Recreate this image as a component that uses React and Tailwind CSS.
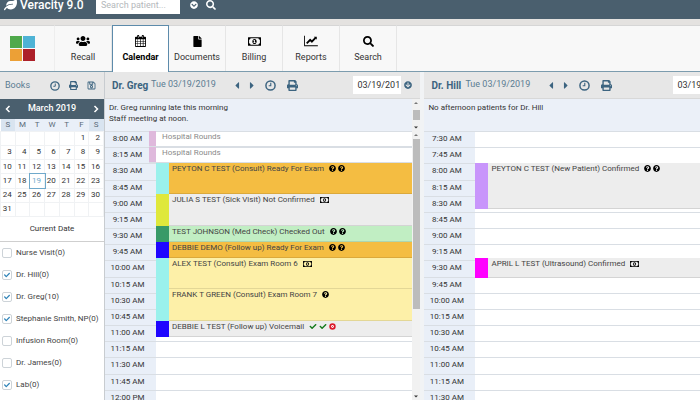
import { FaUsers, FaFile, FaSearch, FaPrint, FaRegSave, FaLeaf, FaCheck, FaQuestionCircle, FaChevronCircleDown, FaArrowCircleDown, FaCaretLeft, FaCaretRight, FaTimesCircle } from 'react-icons/fa'

const ClockIcon = ({ className }) => (
  <svg viewBox="0 0 12 12" className={className} fill="none" stroke="currentColor" aria-hidden="true">
    <circle cx="6" cy="6" r="5" strokeWidth="1.600" />
    <path d="M6.300 3v3.300H4" strokeWidth="1.200" />
  </svg>
)

const CalendarIcon = ({ className }) => (
  <svg viewBox="0 0 26 28" className={className} fill="currentColor" aria-hidden="true">
    <path fillRule="evenodd" d="M2 4h3V2a2 2 0 0 1 2-2h1a2 2 0 0 1 2 2v2h6V2a2 2 0 0 1 2-2h1a2 2 0 0 1 2 2v2h3a2 2 0 0 1 2 2v20a2 2 0 0 1-2 2H2a2 2 0 0 1-2-2V6a2 2 0 0 1 2-2zM2 10v4h4v-4zM7 10v4h5v-4zM13.5 10v4h5v-4zM20 10v4h4v-4zM2 15.300v4.400h4v-4.400zM7 15.300v4.400h5v-4.400zM13.500 15.300v4.400h5v-4.400zM20 15.300v4.400h4v-4.400zM2 21v5h4v-5zM7 21v5h5v-5zM13.500 21v5h5v-5zM20 21v5h4v-5zM7 2v5h1V2zM18 2v5h1V2z" />
  </svg>
)

const MoneyIcon = ({ className }) => (
  <svg viewBox="0 0 30 20" className={className} fill="currentColor" aria-hidden="true">
    <path fillRule="evenodd" d="M1 0h28a1 1 0 0 1 1 1v18a1 1 0 0 1-1 1H1a1 1 0 0 1-1-1V1a1 1 0 0 1 1-1zM6 2.500a4 4 0 0 1-3.500 3.500v8a4 4 0 0 1 3.500 3.500h18a4 4 0 0 1 3.500-3.500V6A4 4 0 0 1 24 2.500zM15 4c3 0 5 2.700 5 6s-2 6-5 6-5-2.700-5-6 2-6 5-6zM14.200 6.500L12 8.400l1 1.200 1-.8V12h-1.500v1.500h5V12H16V6.500z" />
  </svg>
)

const ChartIcon = ({ className }) => (
  <svg viewBox="0 0 32 28" className={className} fill="currentColor" aria-hidden="true">
    <path d="M0 2h2v22h30v2H0zM29.500 4v7l-2-2-9 9a.7.7 0 0 1-1 0L14 14.500 7.500 21l-3-3L13.500 9a.7.7 0 0 1 1 0L18 12.500 24.500 6l-2-2z" />
  </svg>
)

const StopIcon = ({ className }) => (
  <svg viewBox="0 0 12 12" className={className} fill="none" stroke="currentColor" aria-hidden="true">
    <circle cx="6" cy="6" r="4" fill="#fff" strokeWidth="3" />
    <path d="M4.500 4.500l3 3M7.500 4.500l-3 3" strokeWidth="1" />
  </svg>
)

const Logo = () => (
  <svg viewBox="0 0 25 25" className="w-[25px] h-[25px]" aria-hidden="true">
    <rect width="12" height="12" fill="#4fa94b" />
    <rect x="13" width="12" height="12" fill="#4fb3d5" />
    <rect y="13" width="12" height="12" fill="#eca036" />
    <rect x="13" y="13" width="12" height="12" fill="#ad2029" />
  </svg>
)

const tabs = [
  { name: 'Recall', Icon: FaUsers, size: 'w-[14px] h-[14px]' },
  { name: 'Calendar', Icon: CalendarIcon, size: 'w-[11px] h-3', active: true },
  { name: 'Documents', Icon: FaFile, size: 'w-[11px] h-[11px]' },
  { name: 'Billing', Icon: MoneyIcon, size: 'w-[13px] h-[9px]' },
  { name: 'Reports', Icon: ChartIcon, size: 'w-[14px] h-3' },
  { name: 'Search', Icon: FaSearch, size: 'w-[11px] h-[11px]' },
]

const weeks = [
  ['', '', '', '', '', 1, 2],
  [3, 4, 5, 6, 7, 8, 9],
  [10, 11, 12, 13, 14, 15, 16],
  [17, 18, 19, 20, 21, 22, 23],
  [24, 25, 26, 27, 28, 29, 30],
  [31, '', '', '', '', '', ''],
]

const books = [
  { name: 'Nurse Visit(0)', checked: false },
  { name: 'Dr. Hill(0)', checked: true },
  { name: 'Dr. Greg(10)', checked: true },
  { name: 'Stephanie Smith, NP(0)', checked: true },
  { name: 'Infusion Room(0)', checked: false },
  { name: 'Dr. James(0)', checked: false },
  { name: 'Lab(0)', checked: true },
]

const gregTimes = ['8:00 AM', '8:15 AM', '8:30 AM', '8:45 AM', '9:00 AM', '9:15 AM', '9:30 AM', '9:45 AM', '10:00 AM', '10:15 AM', '10:30 AM', '10:45 AM', '11:00 AM', '11:15 AM', '11:30 AM', '11:45 AM', '12:00 PM']
const hillTimes = ['7:30 AM', '7:45 AM', '8:00 AM', '8:15 AM', '8:30 AM', '8:45 AM', '9:00 AM', '9:15 AM', '9:30 AM', '9:45 AM', '10:00 AM', '10:15 AM', '10:30 AM', '10:45 AM', '11:00 AM', '11:15 AM', '11:30 AM']

const gregEvents = [
  { text: 'PEYTON C TEST (Consult) Ready For Exam', height: 'h-[31px]', bar: 'bg-[#9af1ec]', bg: 'bg-[#f4bd42]', icons: ['question', 'question'] },
  { text: 'JULIA S TEST (Sick Visit) Not Confirmed', height: 'h-8', bar: 'bg-[#dfe83c]', bg: 'bg-[#ededed]', icons: ['money'] },
  { text: 'TEST JOHNSON (Med Check) Checked Out', height: 'h-4', bar: 'bg-[#389a68]', bg: 'bg-[#c1eec3]', icons: ['question', 'question'] },
  { text: 'DEBBIE DEMO (Follow up) Ready For Exam', height: 'h-4', bar: 'bg-[#1f06ff]', bg: 'bg-[#f4bd42]', icons: ['question', 'question'] },
  { text: 'ALEX TEST (Consult) Exam Room 6', height: 'h-[31px]', bar: 'bg-[#9af1ec]', bg: 'bg-[#fdf0a8]', icons: ['money'] },
  { text: 'FRANK T GREEN (Consult) Exam Room 7', height: 'h-8', bar: 'bg-[#9af1ec]', bg: 'bg-[#fdf0a8]', icons: ['question'] },
  { text: 'DEBBIE L TEST (Follow up) Voicemail', height: 'h-4', bar: 'bg-[#1f06ff]', bg: 'bg-[#ededed]', icons: ['check', 'check', 'stop'] },
]

const eventIcons = {
  question: <FaQuestionCircle className="w-[7px] h-[7px] text-black" />,
  money: <MoneyIcon className="w-[9px] h-[6px] text-black" />,
  check: <FaCheck className="w-2 h-[7px] text-[#147a1c]" />,
  stop: <StopIcon className="w-[7px] h-[7px] text-[#dc1a2b]" />,
}

const Event = ({ text, height, bar, bg, icons }) => (
  <div className={`flex shrink-0 ${height}`}>
    <div className={`w-[13px] shrink-0 ${bar}`} />
    <div className={`flex flex-1 items-start border-b border-black/10 pl-[3px] text-[#444] ${bg}`}>
      <span className="whitespace-nowrap leading-[11px]">{text}</span>
      <span className="ml-[5px] flex h-[11px] items-center gap-[2px]">
        {icons.map((icon, i) => <span key={i}>{eventIcons[icon]}</span>)}
      </span>
    </div>
  </div>
)

const Times = ({ times }) => (
  <div className="col-start-1 row-start-1 grid h-[275px] auto-rows-fr">
    {times.map((time) => (
      <div key={time} className="flex min-h-0 border-t border-[#d9dee4]">
        <div className="flex w-[51px] justify-center bg-[#e9eff8] pr-[6px] leading-[14px] text-[#333]">{time}</div>
        <div className="flex-1 bg-white" />
      </div>
    ))}
  </div>
)

const BookHeader = ({ name, nameWidth, children }) => (
  <div className="flex h-[27px] shrink-0 items-center border-b border-[#d8d8d8] bg-[#e7e7e7] text-[#3c6480]">
    <h2 className={`ml-[7px] shrink-0 whitespace-nowrap text-[10px] font-bold ${nameWidth}`}>{name}</h2>
    <span className="w-[80px] shrink-0 whitespace-nowrap text-[9px] text-[#5b7c92]">Tue 03/19/2019</span>
    <button aria-label="Previous day" className="ml-[2px]"><FaCaretLeft className="h-[11px] w-[8px]" /></button>
    <button aria-label="Next day" className="ml-[7px]"><FaCaretRight className="h-[11px] w-[8px]" /></button>
    <button aria-label="Now" className="ml-[9px]"><ClockIcon className="h-[11px] w-[11px]" /></button>
    <button aria-label="Print" className="ml-[11px]"><FaPrint className="h-[11px] w-[11px]" /></button>
    {children}
  </div>
)

const Sidebar = () => (
  <aside className="flex w-[104px] shrink-0 flex-col bg-white">
    <div className="flex h-[27px] shrink-0 items-center bg-[#e7e7e7] pl-[5px] text-[#3c6480]">
      <h2 className="w-[45px] text-[9px] text-[#5b7c92]">Books</h2>
      <button aria-label="History"><ClockIcon className="h-[10px] w-[10px]" /></button>
      <button aria-label="Print" className="ml-[9px]"><FaPrint className="h-[9px] w-[9px]" /></button>
      <button aria-label="Save" className="ml-[9px]"><FaRegSave className="h-[9px] w-[9px]" /></button>
    </div>
    <div className="flex h-5 shrink-0 items-center justify-between bg-[#4a5f6e] px-[5px] text-white">
      <button aria-label="Previous month">
        <svg viewBox="0 0 6 8" className="h-2 w-[6px]" fill="none" stroke="currentColor" strokeWidth="1.500"><path d="M4.500 1L1.500 4l3 3" /></svg>
      </button>
      <span className="text-[9px] font-medium">March 2019</span>
      <button aria-label="Next month">
        <svg viewBox="0 0 6 8" className="h-2 w-[6px]" fill="none" stroke="currentColor" strokeWidth="1.500"><path d="M1.500 1l3 3-3 3" /></svg>
      </button>
    </div>
    <table className="h-[98px] w-full shrink-0 table-fixed border-collapse text-[8px] leading-[10px] text-[#333]">
      <thead>
        <tr className="h-3 bg-[#e9eff8] text-[#5b6b78]">
          {['S', 'M', 'T', 'W', 'T', 'F', 'S'].map((day, i) => (
            <th key={i} className={`p-0 font-normal ${i % 6 === 0 ? 'bg-[#d9e4f0]' : ''}`}>{day}</th>
          ))}
        </tr>
      </thead>
      <tbody>
        {weeks.map((week, w) => (
          <tr key={w}>
            {week.map((day, i) => (
              <td key={i} className={`border border-[#f0f2f4] py-0 pl-0 pr-[3px] text-right ${day === 19 ? 'text-[#6fa9cb] outline outline-[#6fa9cb]' : ''}`}>{day}</td>
            ))}
          </tr>
        ))}
      </tbody>
    </table>
    <button className="h-[25px] shrink-0 border-b border-[#cfcfcf] text-[8px] text-[#333]">Current Date</button>
    <div className="flex flex-col">
      {books.map((book) => (
        <label key={book.name} className="flex h-[22px] shrink-0 items-center gap-[4px] pl-[2px] text-[8px] text-[#444]">
          <span className="grid h-[10px] w-[10px] place-items-center">
            <input type="checkbox" defaultChecked={book.checked} className="peer col-start-1 row-start-1 h-[10px] w-[10px] appearance-none rounded-[2px] border border-[#cdd3d8] bg-white" />
            <FaCheck className="pointer-events-none col-start-1 row-start-1 hidden h-[6px] w-[6px] text-[#2f83b8] peer-checked:block" />
          </span>
          <span className="whitespace-nowrap">{book.name}</span>
        </label>
      ))}
    </div>
  </aside>
)

const DateField = () => (
  <input aria-label="Date" defaultValue="03/19/2019" className="h-[18px] w-12 shrink-0 bg-white pl-[4px] pr-[2px] text-[9px] text-[#333]" />
)

const Scrollbar = ({ className, thumb }) => (
  <div className={`flex w-2 shrink-0 flex-col items-center justify-between bg-[#f1f1f1] ${className}`} aria-hidden="true">
    <svg viewBox="0 0 8 8" className="h-2 w-2 shrink-0" fill="#777"><path d="M4 3l2 2H2z" /></svg>
    <div className={`w-[7px] bg-[#bcbcbc] ${thumb}`} />
    <svg viewBox="0 0 8 8" className="h-2 w-2 shrink-0" fill="#333"><path d="M4 5.500l2-2H2z" /></svg>
  </div>
)

const App = () => {
  return (
    <div className="flex h-screen w-full flex-col overflow-hidden bg-white font-['Roboto',sans-serif] text-[8px] text-[#333]">
      <header className="h-[19px] shrink-0 overflow-hidden bg-[#4a5f6e] text-white">
        <div className="-mt-[10px] flex h-[29px] items-center">
          <FaLeaf className="ml-1 h-[13px] w-[13px]" />
          <span className="ml-[3px] w-[76px] whitespace-nowrap text-[12px] leading-none font-medium">Veracity 9.0</span>
          <input aria-label="Search patient" placeholder="Search patient..." className="h-[19px] w-[84px] bg-white pl-[5px] text-[9px] text-[#333] placeholder:text-[#b4b8bb]" />
          <button aria-label="Search options" className="ml-[10px]"><FaChevronCircleDown className="h-2 w-2" /></button>
          <button aria-label="Search" className="ml-2"><FaSearch className="h-[10px] w-[10px]" /></button>
        </div>
      </header>

      <div className="h-[6px] shrink-0 bg-[#e4e2e0]" />

      <nav className="flex h-[47px] shrink-0 border-b border-[#7c9cae] bg-[#f8f8f8]">
        <a href="#home" aria-label="Home" className="flex w-[55px] items-center border-t border-r border-t-[#d6d6d6] border-r-[#eeeeee] pl-[10px]">
          <Logo />
        </a>
        {tabs.map(({ name, Icon, size, active }) => (
          <a
            key={name}
            href={`#${name.toLowerCase()}`}
            className={active
              ? 'z-10 -mb-px flex w-[57px] flex-col items-center border-x border-t border-[#5d8bab] bg-white pt-[8px] font-bold text-black'
              : 'flex w-[57px] flex-col items-center border-t border-r border-t-[#d6d6d6] border-r-[#e6e6e6] pt-[8px]'}
          >
            <span className="flex h-[14px] items-center text-black"><Icon className={size} /></span>
            <span className="mt-[3px] text-[9px] leading-3">{name}</span>
          </a>
        ))}
        <div className="flex-1 border-t border-[#d6d6d6]" />
      </nav>

      <div className="flex min-h-0 flex-1">
        <Sidebar />

        <section className="flex min-w-0 flex-[317] flex-col border-l border-[#c8ccd0]">
          <BookHeader name="Dr. Greg" nameWidth="w-[39px]">
            <div className="ml-auto flex items-center gap-[3px] pr-[8px]">
              <DateField />
              <button aria-label="Go to date"><FaArrowCircleDown className="h-2 w-2" /></button>
            </div>
          </BookHeader>
          <div className="flex h-8 shrink-0 bg-[#ebf0f8]">
            <p className="flex-1 pl-[4px] pt-[3px] leading-[11px]">Dr. Greg running late this morning<br />Staff meeting at noon.</p>
            <Scrollbar className="h-full" thumb="h-[10px]" />
          </div>
          <div className="flex min-h-0 flex-1">
            <div className="grid min-w-0 flex-1 content-start overflow-hidden">
              <Times times={gregTimes} />
              <div className="col-start-1 row-start-1 ml-[44px] flex flex-col">
                {['first', 'second'].map((slot) => (
                  <div key={slot} className="flex h-4 shrink-0 border-b border-[#d9dee4]">
                    <div className="w-[7px] bg-[#dfb9dc]" />
                    <div className="flex-1 pl-[6px] leading-[12px] text-[#8a8a8a]">Hospital Rounds</div>
                  </div>
                ))}
                <div className="ml-[7px] flex flex-col">
                  {gregEvents.map((event) => <Event key={event.text} {...event} />)}
                </div>
              </div>
            </div>
            <Scrollbar className="h-full" thumb="mb-auto h-[170px]" />
          </div>
        </section>

        <section className="flex min-w-0 flex-[277] flex-col overflow-hidden border-l-4 border-[#f1f3f5]">
          <BookHeader name="Dr. Hill" nameWidth="w-[34px]">
            <div className="ml-[61px] flex"><DateField /></div>
          </BookHeader>
          <div className="h-8 shrink-0 bg-[#ebf0f8]">
            <p className="pl-[4px] pt-[3px] leading-[11px]">No afternoon patients for Dr. Hill</p>
          </div>
          <div className="grid min-h-0 flex-1 content-start overflow-hidden">
            <Times times={hillTimes} />
            <div className="col-start-1 row-start-1 ml-[51px] flex flex-col pt-8">
              <Event text="PEYTON C TEST (New Patient) Confirmed" height="h-[46px]" bar="bg-[#c895fb]" bg="bg-[#ededed]" icons={['question', 'question']} />
              <div className="h-[49px] shrink-0" />
              <Event text="APRIL L TEST (Ultrasound) Confirmed" height="h-5" bar="bg-[#ff00ff]" bg="bg-[#ededed]" icons={['money']} />
            </div>
          </div>
        </section>
      </div>
    </div>
  )
}

export default App
